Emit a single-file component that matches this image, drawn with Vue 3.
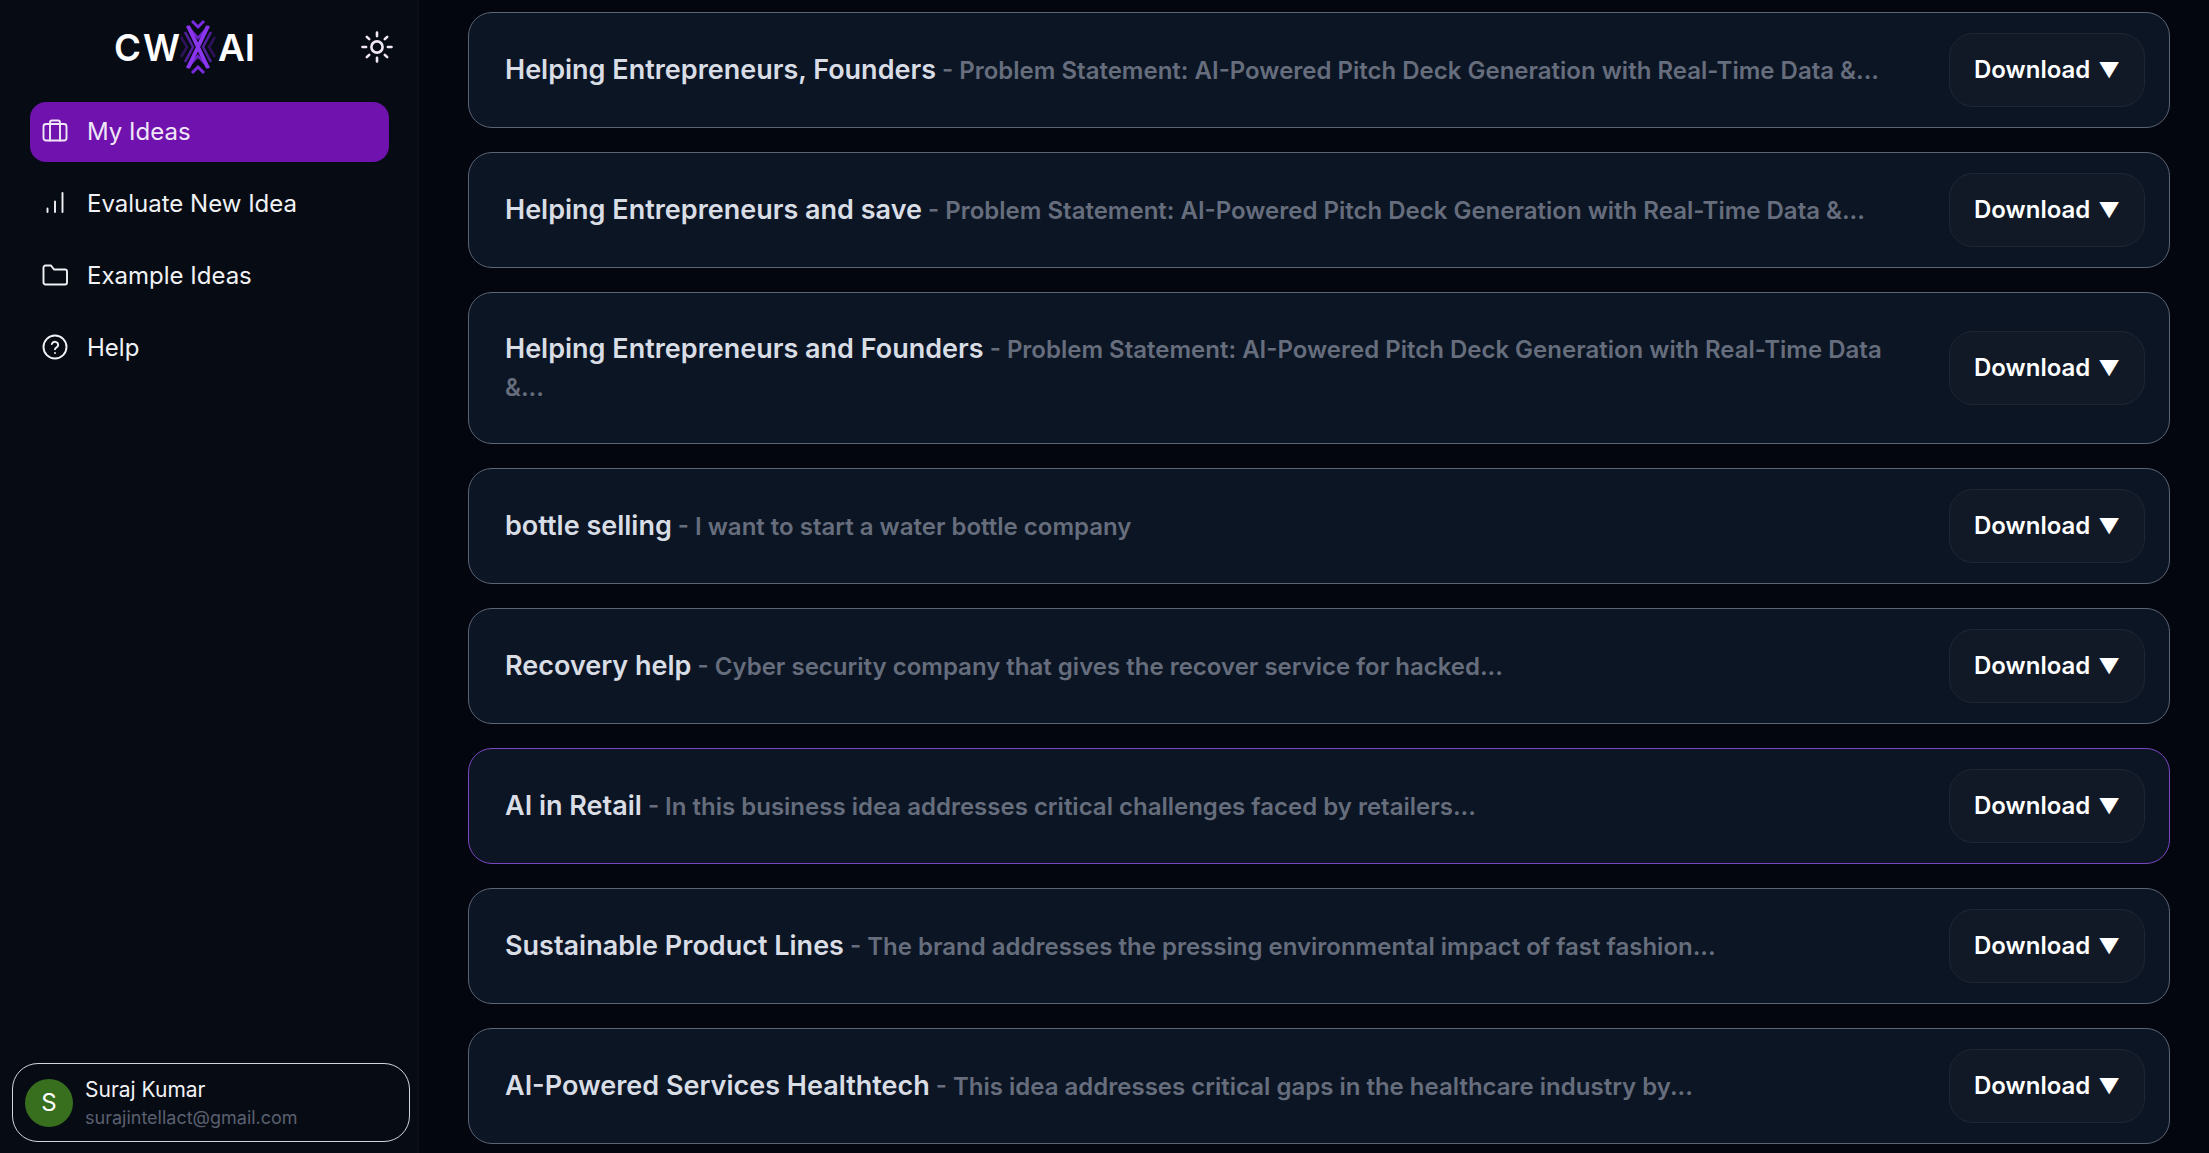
<script setup>
const navItems = [
  { label: 'My Ideas', icon: 'case', active: true },
  { label: 'Evaluate New Idea', icon: 'bars' },
  { label: 'Example Ideas', icon: 'folder' },
  { label: 'Help', icon: 'help' }
]

const pitch = 'Problem Statement: AI-Powered Pitch Deck Generation with Real-Time Data &...'

const ideas = [
  { title: 'Helping Entrepreneurs, Founders', desc: pitch },
  { title: 'Helping Entrepreneurs and save', desc: pitch },
  { title: 'Helping Entrepreneurs and Founders', desc: pitch },
  { title: 'bottle selling', desc: 'I want to start a water bottle company' },
  { title: 'Recovery help', desc: 'Cyber security company that gives the recover service for hacked...' },
  { title: 'AI in Retail', desc: 'In this business idea addresses critical challenges faced by retailers...', hover: true },
  { title: 'Sustainable Product Lines', desc: 'The brand addresses the pressing environmental impact of fast fashion...' },
  { title: 'AI-Powered Services Healthtech', desc: 'This idea addresses critical gaps in the healthcare industry by...' }
]
</script>

<template>
  <div class="page">
    <aside class="sidebar">
      <div class="brand">
        <svg class="logo" viewBox="0 0 142 58" width="142" height="58" fill="none">
          <text class="logo-text" x="0" y="43" textLength="27" lengthAdjust="spacingAndGlyphs">C</text>
          <text class="logo-text" x="29" y="43" textLength="37" lengthAdjust="spacingAndGlyphs">W</text>
          <text class="logo-text" x="104" y="43" textLength="37" lengthAdjust="spacingAndGlyphs">AI</text>
          <path d="M78 3l6 6 6-6M78 55l6-6 6 6" stroke="#7b2be0" stroke-width="3" />
          <path d="M73 8l11 12 11-12M73 50l11-12 11 12" stroke="#6a24c4" stroke-width="2.600" />
          <path d="M71 14l8 15-8 15M97 14l-8 15 8 15" stroke="#52209c" stroke-width="2.600" />
          <path d="M67 19l6 10-6 10M101 19l-6 10 6 10" stroke="#2e1358" stroke-width="2.600" />
          <path d="M74 8l20 42M94 8l-20 42" stroke="#8a35ee" stroke-width="4" />
        </svg>
        <svg class="sun" viewBox="0 0 32 32" width="32" height="32" fill="none" stroke="#f1e6f6" stroke-width="2.600" stroke-linecap="round">
          <circle cx="16" cy="16" r="5.600" />
          <path d="M16 1.500v3.600M16 26.900v3.600M1.500 16h3.600M26.900 16h3.600M5.800 5.800l2.400 2.400M23.800 23.800l2.400 2.400M5.800 26.200l2.400-2.400M23.800 8.200l2.400-2.400" />
        </svg>
      </div>

      <nav class="nav">
        <a v-for="item in navItems" :key="item.label" class="nav-item" :class="{ active: item.active }">
          <svg class="nav-icon" viewBox="0 0 26 26" width="26" height="26" fill="none" stroke="currentColor" stroke-width="1.900" stroke-linecap="round" stroke-linejoin="round">
            <template v-if="item.icon === 'case'">
              <rect x="1.500" y="6" width="23" height="16.500" rx="2.500" />
              <path d="M8 22.500V4.500a2 2 0 0 1 2-2h6a2 2 0 0 1 2 2v18" />
            </template>
            <path v-else-if="item.icon === 'bars'" d="M5.500 22v-3.500M13 22V11.500M20.500 22V3" />
            <path v-else-if="item.icon === 'folder'" d="M1.500 20.500V5.500a2 2 0 0 1 2-2h5.500l3 4h11a2 2 0 0 1 2 2v11a2 2 0 0 1-2 2h-19.500a2 2 0 0 1-2-2z" />
            <template v-else>
              <circle cx="13" cy="13" r="11.500" />
              <path d="M9.800 10a3.300 3.300 0 0 1 6.400 1c0 2.200-3.200 2.700-3.200 4.300M13 19v.1" />
            </template>
          </svg>
          <span>{{ item.label }}</span>
        </a>
      </nav>

      <div class="profile">
        <div class="avatar">S</div>
        <div class="who">
          <div class="name">Suraj Kumar</div>
          <div class="email">surajintellact@gmail.com</div>
        </div>
      </div>
    </aside>

    <main class="main">
      <div v-for="idea in ideas" :key="idea.title" class="card" :class="{ hover: idea.hover }">
        <p class="text"><span class="title">{{ idea.title }}</span><span class="desc"> - {{ idea.desc }}</span></p>
        <button class="download">Download <span class="caret">▼</span></button>
      </div>
    </main>
  </div>
</template>

<style>
html, body {
  margin: 0;
  background: #05070f;
}
</style>

<style scoped>
.page {
  display: flex;
  height: 1153px;
  overflow: hidden;
  font-family: Inter, "Liberation Sans", sans-serif;
  background: #04060f;
}

.sidebar {
  width: 419px;
  flex: none;
  display: flex;
  flex-direction: column;
  box-sizing: border-box;
  padding: 0 8px 11px 12px;
  background: #070b14;
  border-right: 1px solid #0c111b;
}

.brand {
  display: flex;
  align-items: center;
  height: 94px;
  padding-left: 102px;
}

.logo {
  flex: none;
  margin-right: 105px;
}

.logo-text {
  fill: #fff;
  font-size: 37px;
  font-weight: 600;
}

.sun {
  flex: none;
}

.nav {
  display: flex;
  flex-direction: column;
  gap: 12px;
  padding: 8px 21px 0 18px;
  flex: 1;
}

.nav-item {
  display: flex;
  align-items: center;
  gap: 19px;
  height: 60px;
  padding: 0 0 2px 12px;
  box-sizing: border-box;
  border-radius: 16px;
  color: #f1f2f5;
  font-size: 24px;
}

.nav-item.active {
  background: #7012ae;
  color: #efe6f6;
}

.nav-icon {
  flex: none;
}

.profile {
  display: flex;
  align-items: center;
  gap: 12px;
  height: 79px;
  box-sizing: border-box;
  padding: 0 12px;
  border: 1px solid #d3d5da;
  border-radius: 26px;
  background: #070b14;
}

.avatar {
  width: 48px;
  height: 48px;
  border-radius: 50%;
  background: #376f1f;
  color: #fff;
  font-size: 24px;
  display: flex;
  align-items: center;
  justify-content: center;
}

.who {
  padding-top: 2px;
}

.name {
  color: #f1f2f5;
  font-size: 21px;
  line-height: 28px;
}

.email {
  color: #5a6070;
  font-size: 18px;
  line-height: 27px;
}

.main {
  flex: 1;
  min-width: 0;
  display: flex;
  flex-direction: column;
  gap: 24px;
  padding: 12px 39px 0 49px;
}

.card {
  display: flex;
  align-items: center;
  justify-content: space-between;
  gap: 36px;
  padding: 20px 24px 20px 36px;
  border: 1px solid #5b6373;
  border-radius: 24px;
  background: #0c1524;
}

.card.hover {
  border-color: #7a45c0;
}

.text {
  margin: 0;
  padding: 17px 0;
  font-size: 27px;
  line-height: 38px;
  flex: 1;
  min-width: 0;
}

.title {
  color: #d9dde5;
  font-weight: 600;
}

.desc {
  color: #666d7c;
  font-size: 24px;
  font-weight: 600;
  line-height: 36px;
}

.download {
  flex: none;
  width: 196px;
  height: 74px;
  padding: 0 0 2px;
  border: 1px solid #1e2633;
  border-radius: 24px;
  background: #111927;
  color: #fff;
  font-family: inherit;
  font-size: 24px;
  font-weight: 600;
}

.caret {
  font-size: 21px;
  margin-left: 2px;
}
</style>
